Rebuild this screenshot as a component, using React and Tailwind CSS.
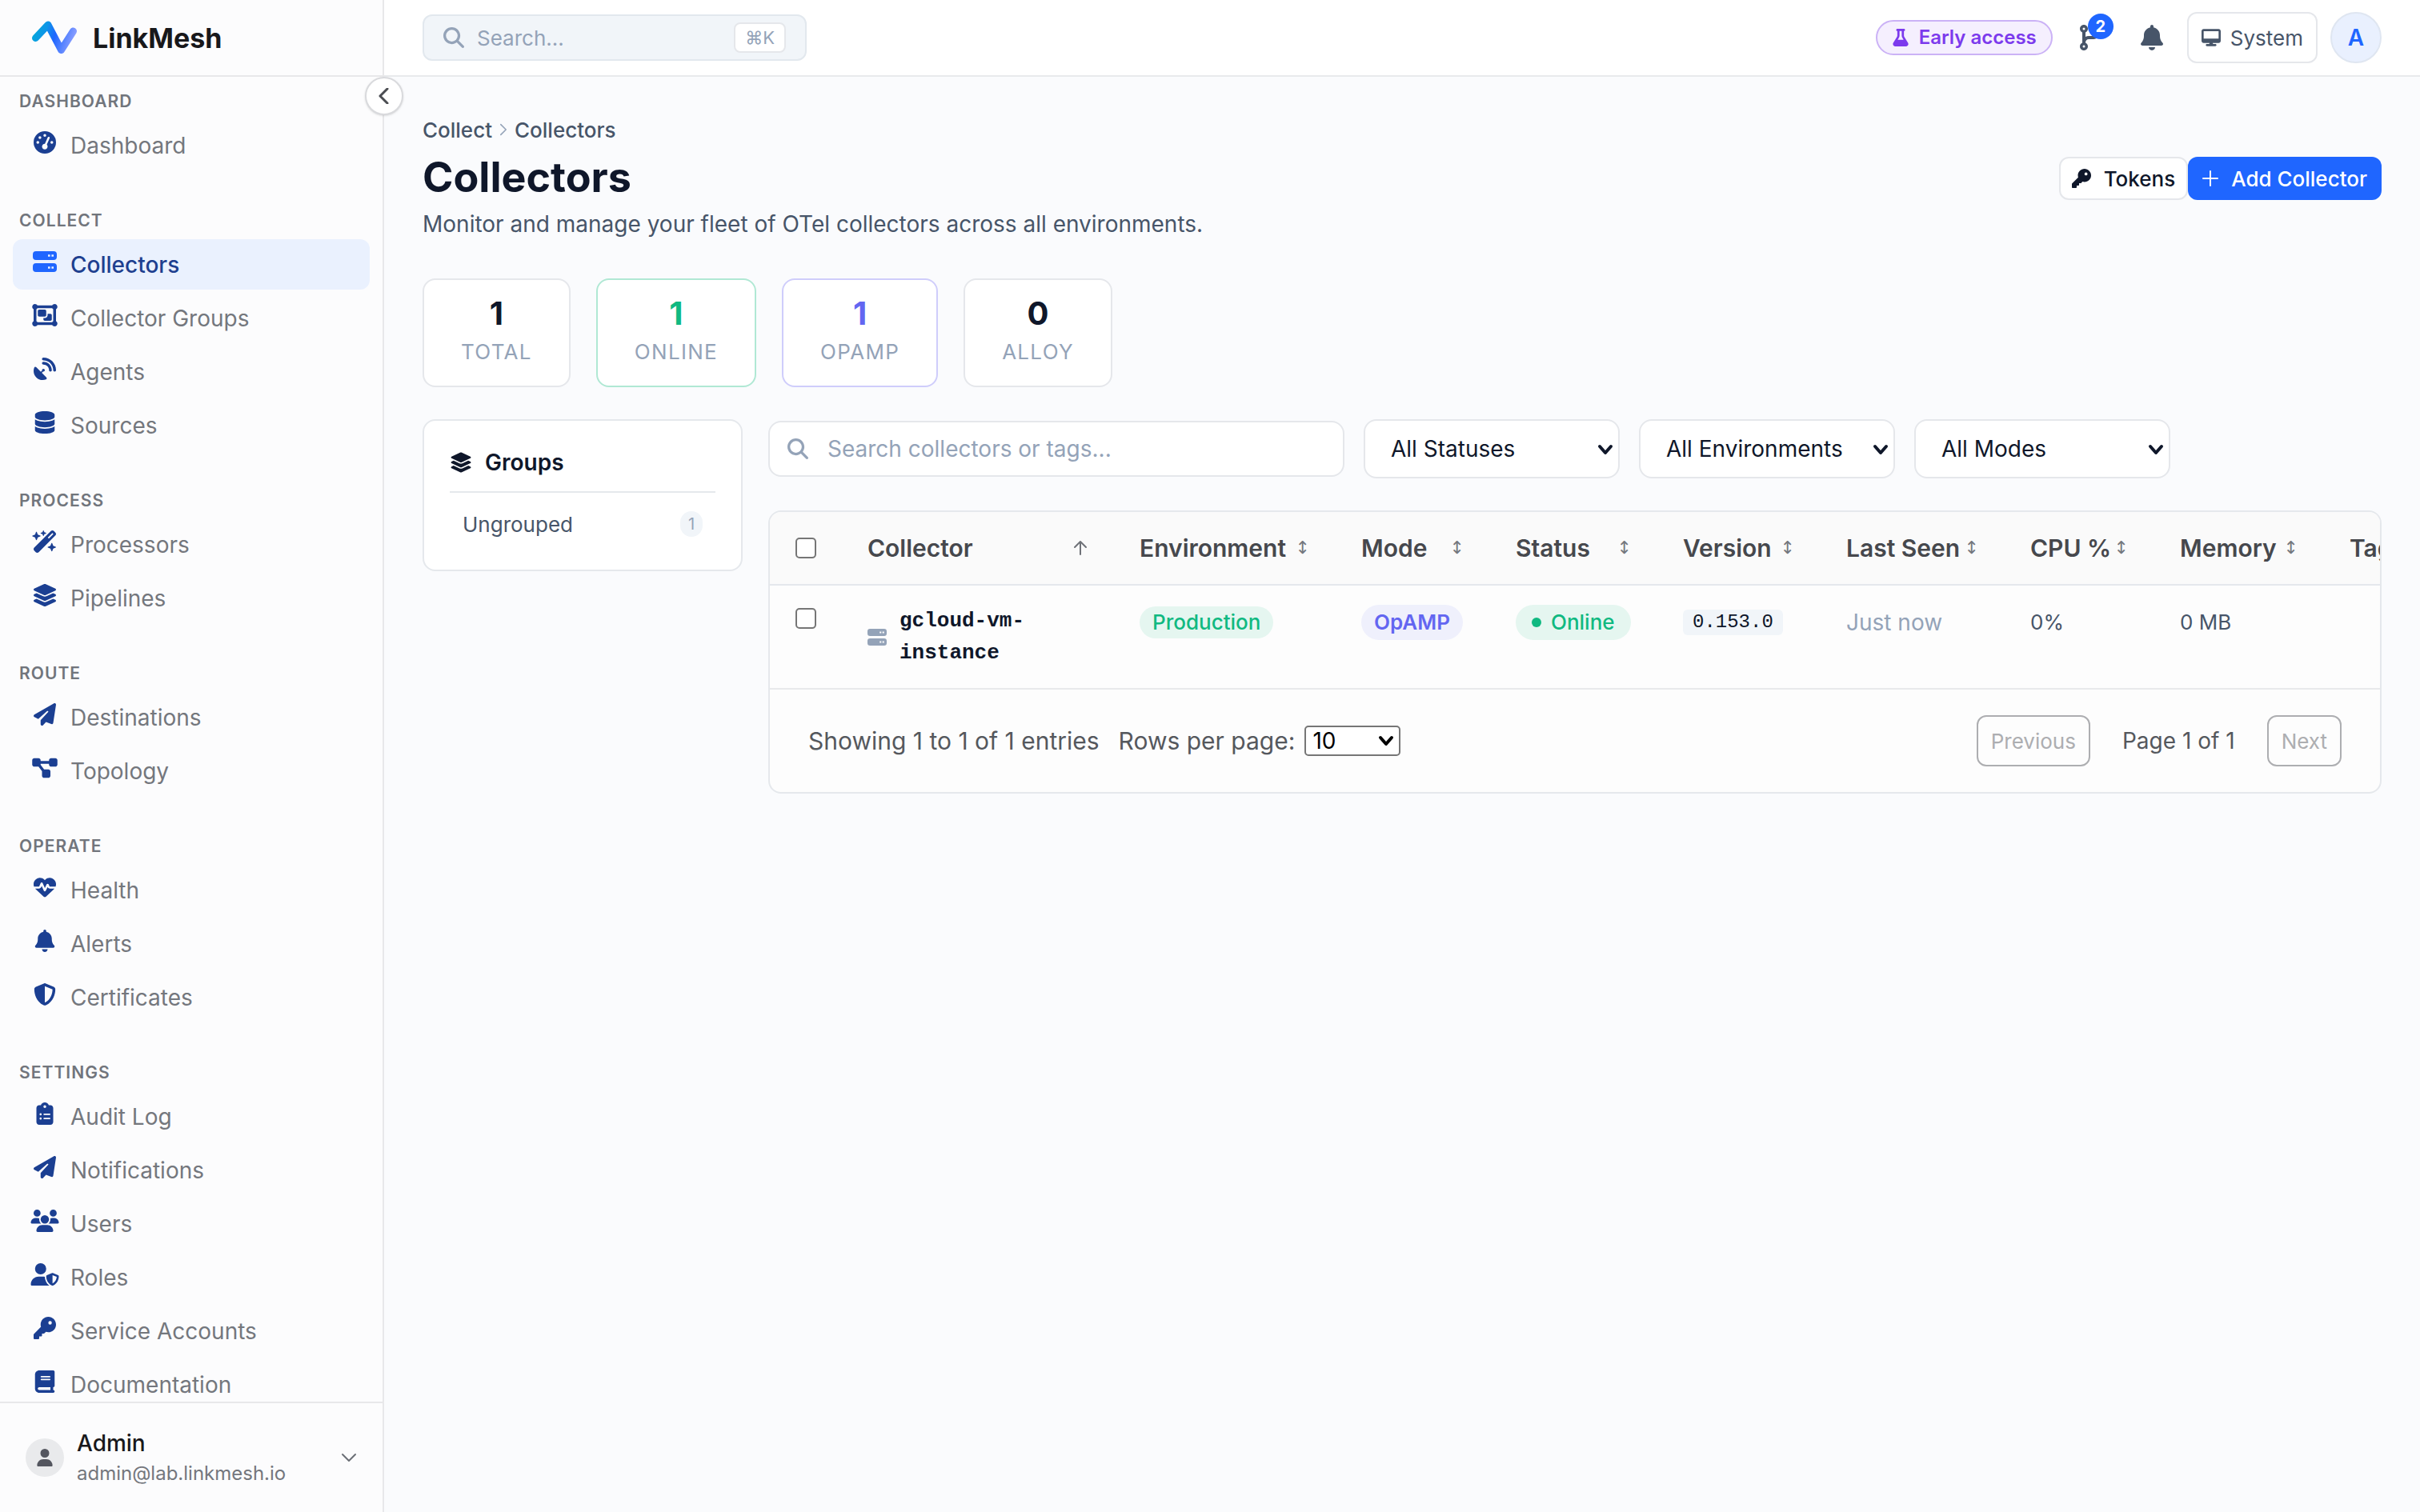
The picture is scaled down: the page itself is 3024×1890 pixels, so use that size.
import {
  FaBell, FaBook, FaClipboardList, FaCodeBranch, FaDatabase, FaDesktop, FaDiagramProject,
  FaFlask, FaGaugeHigh, FaHeartPulse, FaKey, FaLayerGroup, FaMagnifyingGlass, FaObjectGroup,
  FaPaperPlane, FaSatelliteDish, FaShieldHalved, FaUser, FaUserShield, FaUsers,
  FaWandMagicSparkles,
} from "react-icons/fa6";

function ServerIcon({ className }) {
  return (
    <svg viewBox="0 0 30 26" className={className} fill="currentColor" aria-hidden="true">
      <path fillRule="evenodd" d="M4 0H26A4 4 0 0 1 30 4V7A4 4 0 0 1 26 11H4A4 4 0 0 1 0 7V4A4 4 0 0 1 4 0ZM19 4.200V6.800H21.600V4.200ZM23.400 4.200V6.800H26V4.200Z" />
      <path fillRule="evenodd" d="M4 15H26A4 4 0 0 1 30 19V22A4 4 0 0 1 26 26H4A4 4 0 0 1 0 22V19A4 4 0 0 1 4 15ZM19 19.200V21.800H21.600V19.200ZM23.400 19.200V21.800H26V19.200Z" />
    </svg>
  );
}

const SECTIONS = [
  { label: "Dashboard", items: [["Dashboard", FaGaugeHigh, "w-7"]] },
  {
    label: "Collect",
    items: [
      ["Collectors", ServerIcon, "w-[30px]"],
      ["Collector Groups", FaObjectGroup, "w-8"],
      ["Agents", FaSatelliteDish, "w-7"],
      ["Sources", FaDatabase, "w-7"],
    ],
  },
  { label: "Process", items: [["Processors", FaWandMagicSparkles, "w-8"], ["Pipelines", FaLayerGroup, "w-8"]] },
  { label: "Route", items: [["Destinations", FaPaperPlane, "w-7"], ["Topology", FaDiagramProject, "w-8"]] },
  {
    label: "Operate",
    items: [["Health", FaHeartPulse, "w-7"], ["Alerts", FaBell, "w-7"], ["Certificates", FaShieldHalved, "w-7"]],
  },
  {
    label: "Settings",
    items: [
      ["Audit Log", FaClipboardList, "w-7"],
      ["Notifications", FaPaperPlane, "w-7"],
      ["Users", FaUsers, "w-9"],
      ["Roles", FaUserShield, "w-9"],
      ["Service Accounts", FaKey, "w-7"],
      ["Documentation", FaBook, "w-7"],
    ],
  },
];

const STATS = [
  { label: "Total", value: 1, border: "border-[#e5e7eb]", color: "text-[#0f172a]" },
  { label: "Online", value: 1, border: "border-[#b0e8d4]", color: "text-[#10b981]" },
  { label: "OpAMP", value: 1, border: "border-[#cfcdfb]", color: "text-[#6366f1]" },
  { label: "Alloy", value: 0, border: "border-[#e5e7eb]", color: "text-[#0f172a]" },
];

const COLUMNS = [
  { label: "Collector", width: "w-[340px]", sort: "asc" },
  { label: "Environment", width: "w-[277px]", sort: "none" },
  { label: "Mode", width: "w-[193px]", sort: "none" },
  { label: "Status", width: "w-[209px]", sort: "none" },
  { label: "Version", width: "w-[204px]", sort: "none" },
  { label: "Last Seen", width: "w-[230px]", sort: "none" },
  { label: "CPU %", width: "w-[187px]", sort: "none" },
  { label: "Memory", width: "w-[212px]", sort: "none" },
  { label: "Tags", width: "w-[200px]" },
];

function Logo() {
  return (
    <svg viewBox="0 0 56 42" className="h-[42px] w-14" fill="none" aria-hidden="true">
      <defs>
        <linearGradient id="logo" x1="4" y1="12" x2="52" y2="28" gradientUnits="userSpaceOnUse">
          <stop offset="0" stopColor="#06a5dc" />
          <stop offset="0.25" stopColor="#0d95e8" />
          <stop offset="0.5" stopColor="#1f66ff" />
          <stop offset="1" stopColor="#8ea0ff" />
        </linearGradient>
      </defs>
      <path d="M4.500 21.500L20 5L36.500 36.500L51.500 13" stroke="url(#logo)" strokeWidth="9" strokeLinecap="round" strokeLinejoin="round" />
    </svg>
  );
}

function Stroke({ className, d, width = 2 }) {
  return (
    <svg viewBox="0 0 20 20" className={className} fill="none" stroke="currentColor" strokeWidth={width} strokeLinecap="round" strokeLinejoin="round" aria-hidden="true">
      <path d={d} />
    </svg>
  );
}

function SortMark({ sort }) {
  if (sort === "asc") {
    return <Stroke className="size-5 text-[#6f7278]" d="M10 18V2M3 9L10 2L17 9" />;
  }
  if (sort === "none") {
    return <span className="font-['DejaVu_Sans',sans-serif] text-[22px] font-normal text-[#74777d]">↕</span>;
  }
  return null;
}

function Sidebar() {
  return (
    <aside className="relative flex h-screen w-[480px] shrink-0 flex-col border-r-2 border-[#e8e8ea] bg-[#fcfcfd]">
      <div className="flex h-24 shrink-0 items-center gap-5 border-b-2 border-[#e8e8ea] pl-10">
        <Logo />
        <span className="text-[34px] font-bold text-[#18181b]">LinkMesh</span>
      </div>
      <nav className="flex min-h-0 flex-1 flex-col gap-12 overflow-hidden px-4 pt-4" aria-label="Main">
        {SECTIONS.map((section) => (
          <section key={section.label} className="flex shrink-0 flex-col gap-2">
            <h2 className="pl-2 text-[21px] leading-[30px] font-semibold tracking-wider text-[#71757c] uppercase">{section.label}</h2>
            <ul className="flex flex-col gap-1">
              {section.items.map(([label, Icon, width]) => {
                const active = label === "Collectors";
                return (
                  <li key={label}>
                    <a
                      href="#"
                      aria-current={active ? "page" : undefined}
                      className={
                        active
                          ? "flex h-[63px] items-center gap-3 rounded-xl bg-[#eaf1fe] pl-5 text-[28px] font-medium text-[#1e3f8f]"
                          : "flex h-[63px] items-center gap-3 rounded-xl pl-5 text-[28px] text-[#74777d]"
                      }
                    >
                      <span className="flex w-10 justify-center pb-2">
                        <Icon className={(active ? "text-[#1f66ff]" : "text-[#1b3f92]") + " h-7 shrink-0 " + width} />
                      </span>
                      {label}
                    </a>
                  </li>
                );
              })}
            </ul>
          </section>
        ))}
      </nav>
      <button className="flex h-[138px] shrink-0 items-center border-t-2 border-[#e8e8ea] pr-8 pl-8 text-left">
        <span className="flex size-12 items-center justify-center rounded-full bg-[#e9eaec]">
          <FaUser className="h-[22px] w-auto text-[#54565f]" />
        </span>
        <span className="ml-4 flex flex-1 flex-col">
          <span className="text-[28px] leading-10 font-medium text-[#18181b]">Admin</span>
          <span className="text-[24px] leading-9 text-[#74777d]">admin@lab.linkmesh.io</span>
        </span>
        <Stroke className="size-5 text-[#6b6f76]" d="M2 6L10 14L18 6" />
      </button>
      <button aria-label="Collapse sidebar" className="absolute top-24 -right-[26px] z-10 flex size-12 items-center justify-center rounded-full border-2 border-[#d9dadd] bg-white shadow-sm">
        <Stroke className="size-5 text-[#4b4d52]" d="M14 1L5 10L14 19" width={3} />
      </button>
    </aside>
  );
}

function TopBar() {
  return (
    <header className="flex h-24 shrink-0 items-center justify-between border-b-2 border-[#e8eaec] bg-white px-12">
      <label className="flex h-[58px] w-[480px] items-center rounded-xl border-2 border-[#e2e8ee] bg-[#f1f5f9] pr-6 pl-6">
        <FaMagnifyingGlass className="size-[26px] text-[#94a3b8]" />
        <input aria-label="Search" placeholder="Search..." className="ml-4 min-w-0 flex-1 bg-transparent text-[26px] outline-none placeholder:text-[#94a3b8]" />
        <kbd className="flex h-[38px] items-center rounded-lg border-2 border-[#e5e7eb] bg-white px-3 font-[Inter,'DejaVu_Sans',sans-serif] text-[22px] text-[#94a3b8]">⌘K</kbd>
      </label>
      <div className="flex items-center">
        <span className="flex h-11 items-center gap-3 rounded-full border-2 border-[#cbb2f6] bg-[#f5effe] px-[18px] text-[24px] font-semibold text-[#7c3aed]">
          <FaFlask className="h-[22px] w-auto" />
          Early access
        </span>
        <button aria-label="Pending changes" className="relative ml-8 flex h-12 w-8 items-center text-[#475569]">
          <FaCodeBranch className="h-8 w-auto" />
          <span className="absolute -top-1.5 left-3 flex size-8 items-center justify-center rounded-full bg-[#1f66ff] text-[20px] font-bold text-white">2</span>
        </button>
        <button aria-label="Notifications" className="ml-11 text-[#475569]">
          <FaBell className="h-8 w-auto" />
        </button>
        <button className="ml-7 flex h-16 items-center gap-3 rounded-xl border-2 border-[#e5e7eb] px-4 text-[26px] text-[#475569]">
          <FaDesktop className="h-6 w-auto" />
          System
        </button>
        <button aria-label="Account" className="ml-4 flex size-16 items-center justify-center rounded-full border-2 border-[#dfe6f1] bg-[#e9f0fe] text-[28px] font-semibold text-[#1f66ff]">
          A
        </button>
      </div>
    </header>
  );
}

function Filter({ label }) {
  return (
    <div className="relative w-[320px]">
      <select aria-label={label} className="h-[74px] w-full appearance-none rounded-2xl border-2 border-[#e5e7eb] bg-white pl-8 text-[28px] text-[#0f172a]">
        <option>{label}</option>
      </select>
      <Stroke className="pointer-events-none absolute top-7 right-2 size-5 text-[#0f172a]" d="M3 6L10 14L17 6" width={4} />
    </div>
  );
}

function GroupsPanel() {
  return (
    <section className="w-[400px] shrink-0 rounded-2xl border-2 border-[#e5e8ec] bg-white px-8 pt-8 pb-[30px]">
      <h2 className="flex h-[58px] items-start gap-4 border-b-2 border-[#e5e8ec] text-[28px] leading-10 font-semibold text-[#0f172a]">
        <FaLayerGroup className="mt-1.5 h-7 w-auto" />
        Groups
      </h2>
      <button className="mt-3 flex h-[54px] w-full items-center justify-between px-4 text-[26px] text-[#475569]">
        Ungrouped
        <span className="flex h-8 w-7 items-center justify-center rounded-full bg-[#f1f5f9] text-[20px] text-[#94a3b8]">1</span>
      </button>
    </section>
  );
}

function Cell({ children }) {
  return (
    <td className="px-8 pt-6">
      <div className="flex h-11 items-center">{children}</div>
    </td>
  );
}

function CollectorsTable() {
  const box = "block size-[26px] appearance-none rounded-[5px] border-2 border-[#767676] bg-white";
  return (
    <section className="mt-10 overflow-hidden rounded-2xl border-2 border-[#e5e8ec] bg-[#fdfdfd]">
      <div className="overflow-hidden">
        <table className="w-full min-w-[2142px] table-fixed border-collapse text-left">
          <thead>
            <tr className="h-[91px] border-b-2 border-[#e5e8ec] bg-[#fafafa]">
              <th className="w-[90px] pl-8">
                <input type="checkbox" aria-label="Select all collectors" className={box} />
              </th>
              {COLUMNS.map((column) => (
                <th key={column.label} className={column.width + " px-8 text-[30px] leading-10 font-semibold whitespace-nowrap text-[#46484d]"}>
                  <span className="flex items-center justify-between">
                    {column.label}
                    <SortMark sort={column.sort} />
                  </span>
                </th>
              ))}
            </tr>
          </thead>
          <tbody>
            <tr className="h-[130px] border-b-2 border-[#e8e9eb] align-top text-[26px] leading-10 whitespace-nowrap text-[#475569]">
              <td className="pt-7 pl-8">
                <input type="checkbox" aria-label="Select gcloud-vm-instance" className={box} />
              </td>
              <td className="px-8 pt-6">
                <div className="flex items-center gap-4">
                  <ServerIcon className="h-[21px] w-6 shrink-0 text-[#94a3b8]" />
                  <span className="w-[172px] font-['Liberation_Mono',monospace] text-[26px] font-bold whitespace-normal text-[#0f172a]">gcloud-vm-instance</span>
                </div>
              </td>
              <Cell>
                <span className="flex h-10 items-center rounded-full bg-[#e5f6f0] px-4 font-medium text-[#10b981]">Production</span>
              </Cell>
              <Cell>
                <span className="flex h-11 items-center rounded-full bg-[#eff0fc] px-4 font-semibold text-[#6366f1]">OpAMP</span>
              </Cell>
              <Cell>
                <span className="flex h-11 items-center gap-3 rounded-full bg-[#e5f6f0] px-5 font-medium text-[#10b981]">
                  <span className="size-3 rounded-full bg-[#10b981]" />
                  Online
                </span>
              </Cell>
              <Cell>
                <code className="flex h-8 items-center rounded-md bg-[#f1f5f9] px-3 font-['Liberation_Mono',monospace] text-[24px] text-[#0f172a]">0.153.0</code>
              </Cell>
              <Cell>
                <span className="text-[28px] text-[#94a3b8]">Just now</span>
              </Cell>
              <Cell>0%</Cell>
              <Cell>0 MB</Cell>
              <td />
            </tr>
          </tbody>
        </table>
      </div>
      <footer className="flex h-32 items-center px-12 text-[30px] text-[#55585d]">
        <span>Showing 1 to 1 of 1 entries</span>
        <label htmlFor="page-size" className="ml-6">Rows per page:</label>
        <span className="relative ml-3">
          <select id="page-size" className="block h-[38px] w-[120px] appearance-none rounded-[5px] border-2 border-[#767676] bg-white pl-2 text-[28px] leading-8 text-black">
            <option>10</option>
          </select>
          <Stroke className="pointer-events-none absolute top-[9px] right-2 size-5 text-black" d="M3 6L10 14L17 6" width={4} />
        </span>
        <span className="flex-1" />
        <button disabled className="h-16 rounded-xl border-2 border-[#adaeb1] px-4 text-[26px] text-[#adaeb1]">Previous</button>
        <span className="mx-10 text-[28px]">Page 1 of 1</span>
        <button disabled className="h-16 rounded-xl border-2 border-[#adaeb1] px-4 text-[26px] text-[#adaeb1]">Next</button>
      </footer>
    </section>
  );
}

export default function App() {
  return (
    <div className="flex h-screen overflow-hidden bg-[#fafbfd] font-[Inter,'Noto_Sans',sans-serif]">
      <Sidebar />
      <div className="flex min-w-0 flex-1 flex-col">
        <TopBar />
        <main className="flex-1 px-12 pt-12">
          <nav aria-label="Breadcrumb" className="flex h-9 items-center gap-1.5 text-[26px] font-medium text-[#475569]">
            <a href="#">Collect</a>
            <Stroke className="size-4 text-[#94a3b8]" d="M6 2L14 10L6 18" />
            <a href="#">Collectors</a>
          </nav>
          <div className="flex items-start justify-between">
            <div>
              <h1 className="mt-2 text-[52px] leading-[68px] font-bold text-[#0f172a]">Collectors</h1>
              <p className="mt-1 text-[28px] leading-10 text-[#475569]">Monitor and manage your fleet of OTel collectors across all environments.</p>
            </div>
            <div className="mt-4 flex">
              <button className="flex h-[54px] items-center gap-4 rounded-xl border-2 border-[#e5e7eb] bg-white px-[14px] text-[26px] font-medium text-[#0f172a]">
                <FaKey className="h-6 w-auto" />
                Tokens
              </button>
              <button className="flex h-[54px] items-center gap-4 rounded-xl bg-[#1f66ff] px-[18px] text-[26px] font-medium text-white">
                <Stroke className="size-5" d="M10 1V19M1 10H19" />
                Add Collector
              </button>
            </div>
          </div>
          <div className="mt-12 flex gap-8">
            {STATS.map((stat) => (
              <div key={stat.label} className={stat.border + " flex h-[136px] flex-col items-center rounded-2xl border-2 bg-white px-[46px] pt-4"}>
                <span className={stat.color + " text-[40px] leading-[52px] font-bold"}>{stat.value}</span>
                <span className="mt-1 text-[26px] leading-9 tracking-wider text-[#94a3b8] uppercase">{stat.label}</span>
              </div>
            ))}
          </div>
          <div className="mt-10 flex items-start gap-8">
            <GroupsPanel />
            <div className="min-w-0 flex-1">
              <div className="flex items-center gap-6">
                <label className="flex h-[70px] w-[720px] items-center rounded-2xl border-2 border-[#e5e7eb] bg-white pr-4 pl-[22px]">
                  <FaMagnifyingGlass className="size-[26px] text-[#94a3b8]" />
                  <input aria-label="Search collectors" placeholder="Search collectors or tags..." className="ml-6 min-w-0 flex-1 bg-transparent text-[28px] outline-none placeholder:text-[#94a3b8]" />
                </label>
                <Filter label="All Statuses" />
                <Filter label="All Environments" />
                <Filter label="All Modes" />
              </div>
              <CollectorsTable />
            </div>
          </div>
        </main>
      </div>
    </div>
  );
}
